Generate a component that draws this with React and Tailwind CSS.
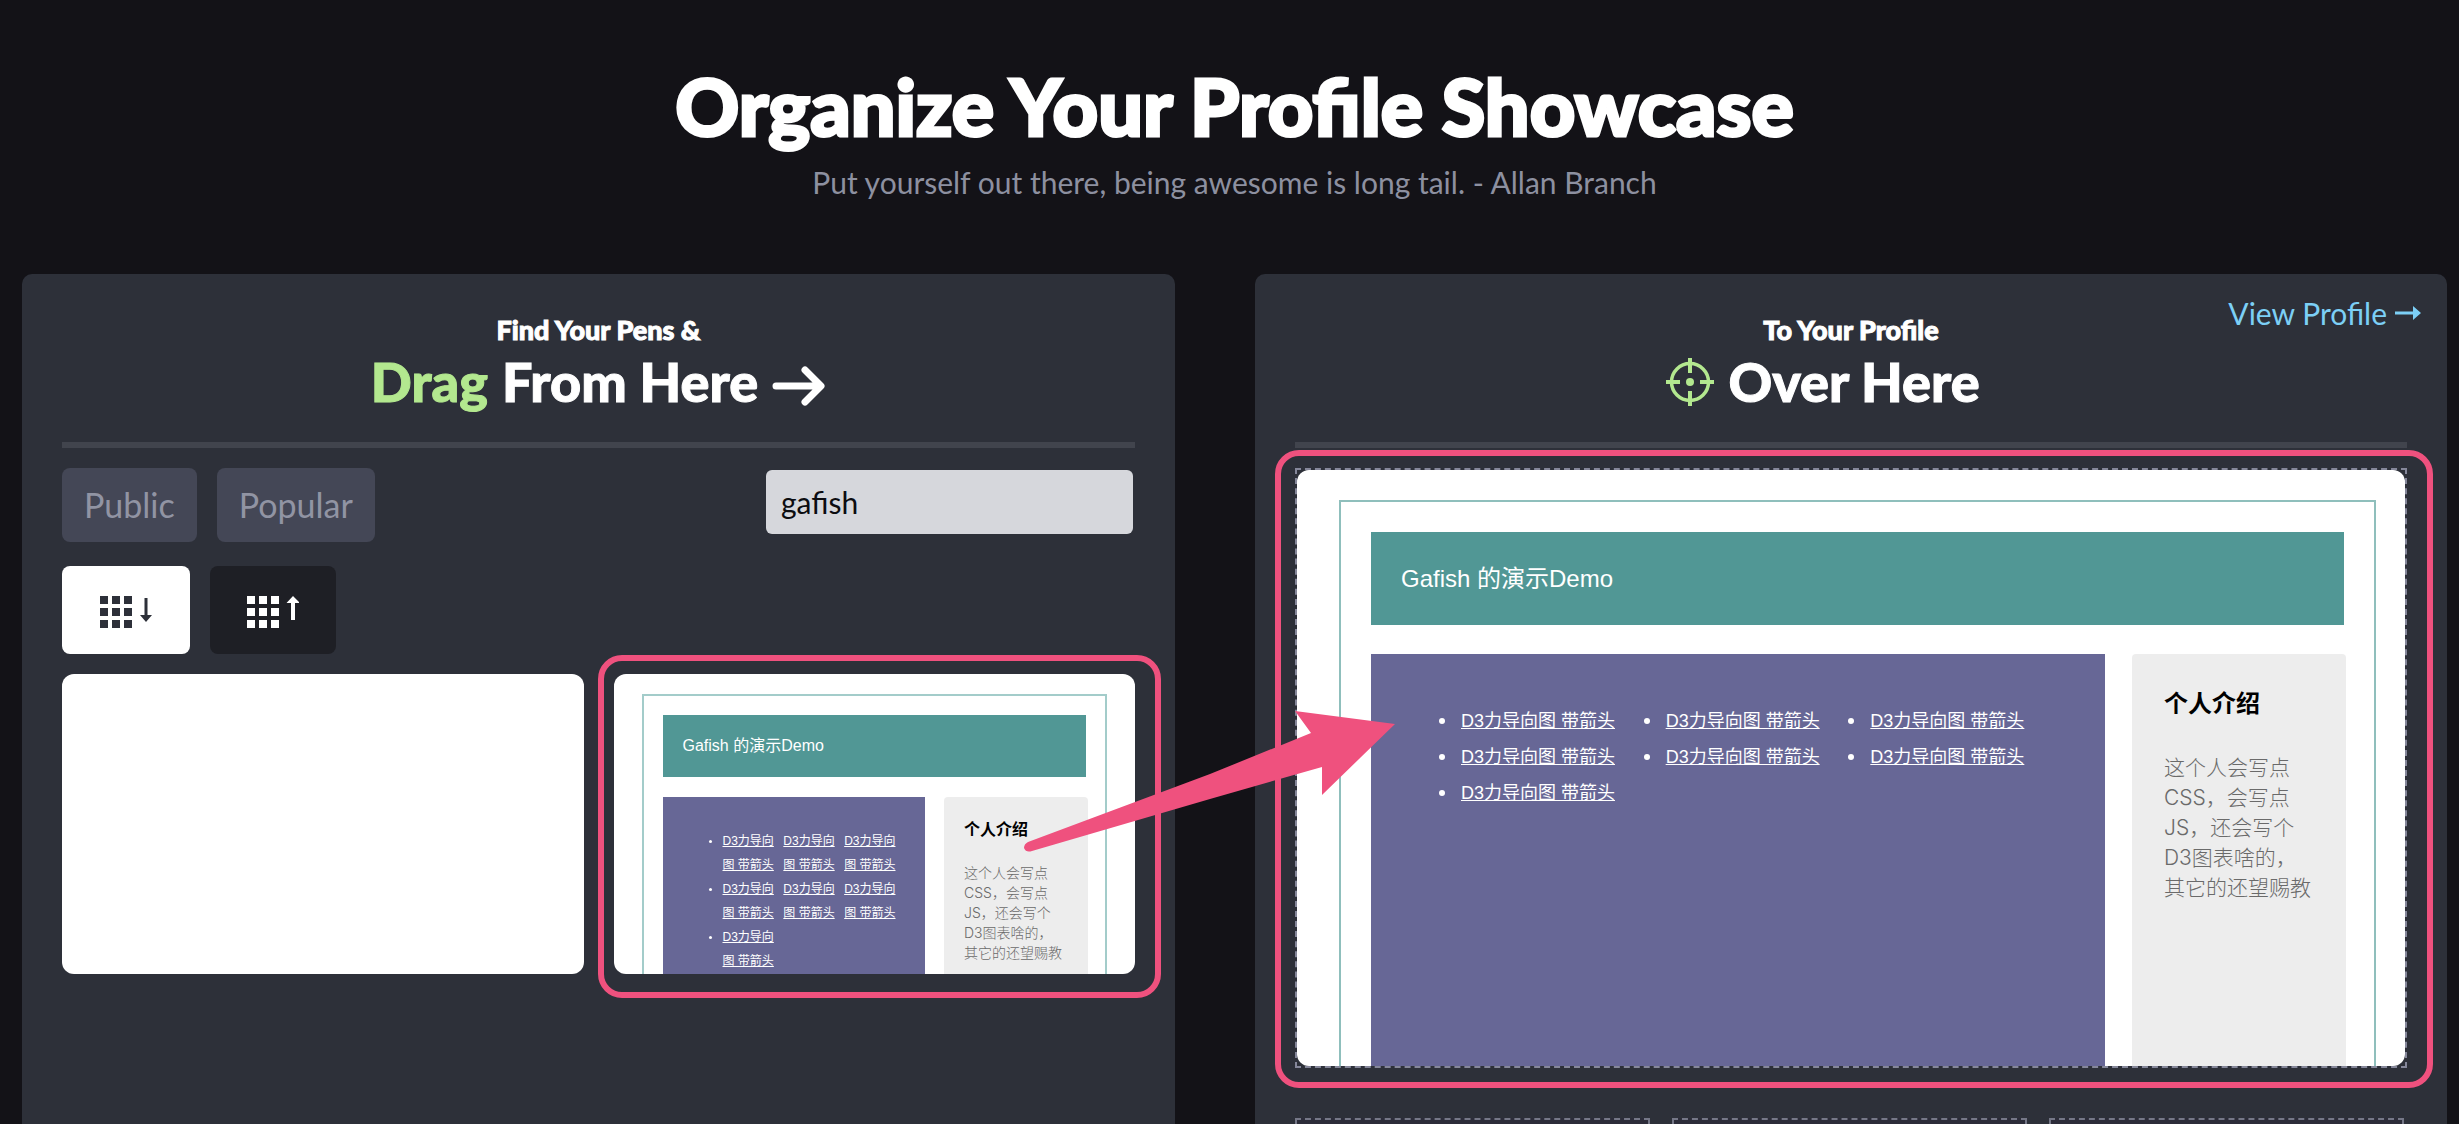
import React from "react";

const latin = "font-['Lato','Liberation_Sans',sans-serif]";
const demoFont = "font-['Liberation_Sans','Noto_Sans_CJK_SC',sans-serif]";
const lightFont = "font-['Inter','Noto_Sans_CJK_SC',sans-serif] font-light";

const pens = Array.from({ length: 7 }, (_, i) => ({ id: i, title: "D3力导向图 带箭头" }));
const introLines = ["这个人会写点", "CSS，会写点", "JS，还会写个", "D3图表啥的，", "其它的还望赐教"];

function GridIcon({ direction }) {
  const cells = [0, 12, 24];
  return (
    <svg width="52" height="32" viewBox="0 0 52 32" fill="currentColor" aria-hidden="true">
      {cells.map((y) => cells.map((x) => <rect key={`${x}-${y}`} x={x} y={y} width="8" height="8" />))}
      {direction === "down" ? (
        <path d="M44.500 2h3v17h4.500l-6 7-6-7h4.500z" />
      ) : (
        <path d="M44 24h4V7h5l-7-7-6.500 7H44z" />
      )}
    </svg>
  );
}

function TargetIcon() {
  return (
    <svg width="48" height="48" viewBox="0 0 48 48" fill="none" stroke="#b3e88f" strokeWidth="4" aria-hidden="true">
      <circle cx="24" cy="24" r="18.500" strokeWidth="3.500" />
      <path d="M24 0v15M24 33v15M0 24h14M34 24h14" />
      <circle cx="24" cy="24" r="4" fill="#b3e88f" stroke="none" />
    </svg>
  );
}

function SmallPreview() {
  return (
    <div className={`${demoFont} h-[300px] overflow-hidden rounded-xl bg-white px-7 pt-5`}>
      <div className="h-[400px] border-2 border-[#a3ccca] px-[19px] pt-[19px]">
        <div className="flex h-[62px] items-center bg-[#519795] px-5 text-[16px] text-white">Gafish 的演示Demo</div>
        <div className="mt-5 flex h-[300px] gap-[19px]">
          <ul className="grid flex-1 grid-cols-3 content-start gap-x-[9px] bg-[#676796] pr-[29px] pl-[60px] pt-8 text-[12px] leading-6 text-white">
            {pens.map((pen, i) => (
              <li key={pen.id} className="flex items-start">
                {i % 3 === 0 && <span className="mt-[11px] -ml-[14px] mr-[11px] size-[3px] shrink-0 rounded-full bg-white" />}
                <a href="#pen" className="w-[53px] shrink-0 underline">D3力导向<br />图 带箭头</a>
              </li>
            ))}
          </ul>
          <div className="-mr-[2px] w-[144px] rounded-sm bg-[#ededed] px-5 pt-[21px]">
            <h3 className="text-[16px] leading-6 font-bold text-black">个人介绍</h3>
            <p className={`${lightFont} mt-[21px] text-[14px] leading-5 whitespace-nowrap text-[#6a6a6a]`}>
              {introLines.map((line) => <span key={line} className="block">{line}</span>)}
            </p>
          </div>
        </div>
      </div>
    </div>
  );
}

function LargePreview() {
  return (
    <div className={`${demoFont} h-[596px] overflow-hidden rounded-xl bg-white pt-[30px] pr-[29px] pl-[42px]`}>
      <div className="h-[700px] border-2 border-[#8fbfbc] px-[30px] pt-[30px]">
        <div className="flex h-[93px] items-center bg-[#519795] px-[30px] text-[24px] text-white">Gafish 的演示Demo</div>
        <div className="mt-[29px] flex h-[600px] gap-[27px]">
          <ul className="grid flex-1 grid-cols-3 content-start bg-[#676796] pr-[30px] pl-[90px] pt-[49px] text-[18px] leading-9 text-white">
            {pens.map((pen) => (
              <li key={pen.id} className="flex items-center">
                <span className="-ml-[22px] mr-4 size-[6px] shrink-0 rounded-full bg-white" />
                <a href="#pen" className="whitespace-nowrap underline">{pen.title}</a>
              </li>
            ))}
          </ul>
          <div className="-mr-[2px] w-[214px] rounded-sm bg-[#ededed] px-8 pt-8">
            <h3 className="text-[24px] leading-9 font-bold text-black">个人介绍</h3>
            <p className={`${lightFont} mt-[31px] text-[21px] leading-[30px] whitespace-nowrap text-[#6a6a6a]`}>
              {introLines.map((line) => <span key={line} className="block">{line}</span>)}
            </p>
          </div>
        </div>
      </div>
    </div>
  );
}

export default function App() {
  return (
    <div className={`${latin} flex h-screen flex-col overflow-hidden bg-[#131217] pr-3 pl-[22px] text-white`}>
      <header className="flex h-[274px] shrink-0 flex-col items-center pt-[56px]">
        <h1 className="text-[79px] leading-[100px] font-black [-webkit-text-stroke:3px_white]">Organize Your Profile Showcase</h1>
        <p className="mt-[6px] text-[30px] leading-10 text-[#8d90a0]">
          Put yourself out there, being awesome is long tail. - Allan Branch
        </p>
      </header>

      <main className="relative grid flex-1 grid-cols-[1153fr_1192fr] gap-20">
        <section className="rounded-t-[10px] bg-[#2d3039] px-10">
          <header className="h-[168px] pt-10 text-center font-black">
            <p className="text-[27px] leading-8 [-webkit-text-stroke:1px_currentColor]">Find Your Pens &amp;</p>
            <h2 className="flex items-center justify-center text-[54px] leading-[72px] [-webkit-text-stroke:1px_currentColor]">
              <span className="mr-[14px] text-[#b3e88f]">Drag</span>From Here
              <svg className="mt-2 ml-[14px]" width="54" height="40" viewBox="0 0 54 40" fill="none" stroke="currentColor" strokeWidth="7" strokeLinecap="round" strokeLinejoin="round" aria-hidden="true">
                <path d="M4 20h44M33 4l16 16-16 16" />
              </svg>
            </h2>
          </header>
          <hr className="h-[6px] border-0 bg-[#41444d]" />
          <div className="mt-5 flex items-start justify-between">
            <div className="flex gap-5 text-[34px] leading-[74px] text-[#9194a3]">
              <button className="rounded-lg bg-[#444756] px-[22px]">Public</button>
              <button className="rounded-lg bg-[#444756] px-[22px]">Popular</button>
            </div>
            <input aria-label="Search pens" defaultValue="gafish" className="mt-[2px] mr-[2px] h-16 w-[367px] rounded-md bg-[#d6d7dc] px-[15px] text-[30px] text-[#0c0c10]" />
          </div>
          <div className="mt-6 flex gap-5">
            <button aria-label="Sort descending" className="flex h-[88px] w-32 items-center justify-center rounded-lg bg-white pt-1 text-[#2d3039]">
              <GridIcon direction="down" />
            </button>
            <button aria-label="Sort ascending" className="flex h-[88px] w-[126px] items-center justify-center rounded-lg bg-[#1e1f25] pt-1 text-white">
              <GridIcon direction="up" />
            </button>
          </div>
          <div className="mt-5 grid grid-cols-2 gap-[30px]">
            <div className="rounded-xl bg-white" />
            <div className="relative">
              <SmallPreview />
              <div className="pointer-events-none absolute -top-[19px] -right-[26px] -bottom-6 -left-4 rounded-[24px] border-[6px] border-[#ef517e]" />
            </div>
          </div>
        </section>

        <section className="relative rounded-t-[10px] bg-[#2d3039] px-10">
          <a href="#profile" className="absolute top-[19px] right-[26px] flex items-center gap-2 text-[30px] leading-10 text-[#7ccff6]">
            View Profile
            <svg width="26" height="16" viewBox="0 0 26 16" fill="currentColor" aria-hidden="true">
              <path d="M0 6.500h18V1l8 7-8 7V9.500H0z" />
            </svg>
          </a>
          <header className="h-[168px] pt-10 text-center font-black">
            <p className="text-[27px] leading-8 [-webkit-text-stroke:1px_currentColor]">To Your Profile</p>
            <h2 className="flex items-center justify-center gap-[14px] pr-14 text-[54px] leading-[72px] [-webkit-text-stroke:1px_currentColor]">
              <TargetIcon />
              Over Here
            </h2>
          </header>
          <hr className="h-[6px] border-0 bg-[#41444d]" />
          <div className="relative mt-5">
            <div className="border-2 border-dashed border-[#85879a]">
              <LargePreview />
            </div>
            <div className="pointer-events-none absolute -top-[18px] -right-[26px] -bottom-5 -left-5 rounded-[24px] border-[6px] border-[#ef517e]" />
          </div>
          <div className="mt-[50px] mr-[3px] grid grid-cols-3 gap-[22px]">
            <div className="h-[190px] border-2 border-dashed border-[#757787] bg-[#2c2c39]" />
            <div className="h-[190px] border-2 border-dashed border-[#757787] bg-[#2c2c39]" />
            <div className="h-[190px] border-2 border-dashed border-[#757787] bg-[#2c2c39]" />
          </div>
        </section>

        <svg className="pointer-events-none absolute top-[430px] left-[998px]" width="384" height="160" viewBox="1020 704 384 160" fill="#ef517e" aria-hidden="true">
          <path d="M1028 842 L1210 774 L1311 733 L1295 711 L1395 724 L1322 795 L1322 767 L1210 799 L1032 851 Q1026 853 1024 848 Q1024 844 1028 842z" />
        </svg>
      </main>
    </div>
  );
}
